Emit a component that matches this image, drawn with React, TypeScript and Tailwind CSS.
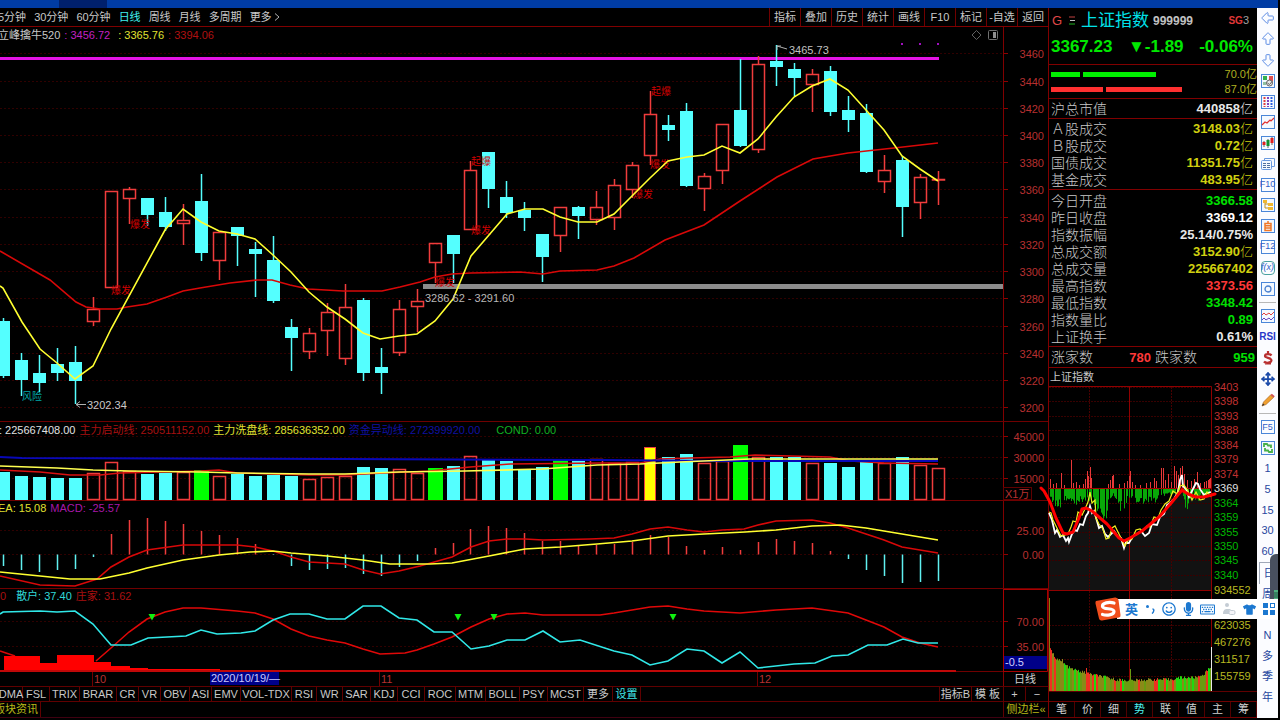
import React from "react";
import { ArrowBigDown, ArrowBigLeft, ArrowBigUp, Move } from "lucide-react";
import { FaMicrophone, FaRegKeyboard, FaRegSmile, FaTshirt } from "react-icons/fa";

type Tone = "up" | "down" | "green" | "yellow";
type Candle = [Tone, number, number, number, number];
type Point = [number, number];

const FIRST_X = 3;
const STEP = 17.98;
const xAt = (i: number) => FIRST_X + STEP * i;
const path = (pts: Point[]) => "M" + pts.map(([x, y]) => `${x} ${y}`).join("L");

// tone, high, body top, body bottom, low
const CANDLES: Candle[] = [
  ["down", 318, 321, 376, 378], ["down", 353, 360, 380, 396], ["down", 355, 373, 383, 392],
  ["down", 348, 364, 373, 381], ["down", 346, 362, 381, 404], ["up", 297, 309, 322, 326],
  ["up", 191, 191, 288, 288], ["up", 187, 189, 199, 224], ["down", 198, 198, 215, 226],
  ["down", 197, 212, 227, 231], ["up", 204, 220, 224, 245], ["down", 174, 201, 253, 261],
  ["up", 232, 232, 261, 280], ["down", 227, 227, 236, 266], ["down", 242, 249, 254, 297],
  ["down", 236, 260, 301, 303], ["down", 319, 327, 338, 371], ["up", 328, 333, 352, 359],
  ["up", 303, 312, 331, 356], ["up", 284, 307, 359, 365], ["down", 298, 300, 373, 381],
  ["down", 348, 367, 373, 394], ["up", 300, 309, 353, 356], ["up", 289, 301, 307, 332],
  ["up", 243, 243, 263, 283], ["down", 235, 235, 254, 283], ["up", 161, 170, 230, 230],
  ["down", 152, 152, 189, 208], ["down", 181, 197, 213, 218], ["down", 202, 210, 218, 231],
  ["down", 234, 234, 257, 282], ["up", 207, 207, 236, 252], ["down", 206, 207, 216, 239],
  ["up", 191, 207, 220, 225], ["up", 179, 185, 218, 230], ["up", 162, 165, 190, 198],
  ["up", 91, 114, 156, 165], ["down", 115, 125, 130, 141], ["down", 103, 111, 186, 187],
  ["up", 173, 176, 189, 211], ["up", 124, 124, 171, 184], ["down", 59, 110, 146, 147],
  ["up", 56, 64, 150, 153], ["down", 45, 61, 67, 86], ["down", 63, 69, 78, 96],
  ["up", 69, 74, 85, 112], ["down", 66, 71, 112, 116], ["down", 96, 110, 120, 132],
  ["down", 104, 113, 172, 173], ["up", 155, 170, 182, 193], ["down", 156, 160, 207, 237],
  ["up", 174, 177, 203, 219], ["up", 171, 179, 179, 205],
];

const VOLUMES: [Tone, number][] = [
  ["down", 472], ["down", 476], ["down", 477], ["down", 478], ["down", 478], ["up", 473],
  ["up", 462], ["up", 471], ["down", 474], ["down", 473], ["up", 472], ["green", 470],
  ["up", 476], ["down", 474], ["down", 476], ["down", 475], ["down", 476], ["up", 479],
  ["up", 477], ["up", 476], ["down", 467], ["down", 468], ["up", 469], ["up", 473],
  ["green", 468], ["down", 466], ["up", 456], ["down", 460], ["down", 461], ["down", 469],
  ["down", 467], ["green", 460], ["down", 460], ["up", 459], ["up", 463], ["up", 462],
  ["yellow", 447], ["down", 457], ["down", 454], ["up", 463], ["up", 461], ["green", 445],
  ["up", 457], ["down", 457], ["down", 457], ["up", 463], ["down", 463], ["down", 467],
  ["down", 462], ["up", 463], ["down", 457], ["up", 465], ["up", 468],
];

const MACD = [
  566, 570, 572, 570, 569, 557, 534, 520, 518, 521, 524, 531, 535, 538, 544, 554, 566, 570, 569,
  568, 574, 576, 567, 561, 548, 543, 529, 526, 528, 533, 541, 541, 545, 545, 544, 542, 535, 537,
  546, 550, 547, 550, 542, 539, 541, 543, 551, 559, 570, 576, 583, 582, 581,
];

const MA5: Point[] = [
  [0, 286], [3, 288], [22, 322], [40, 349], [57, 363], [75, 379], [93, 366], [111, 329], [165, 230],
  [183, 209], [201, 222], [219, 231], [237, 234], [255, 239], [273, 255], [291, 272], [309, 292],
  [327, 307], [345, 319], [363, 333], [380, 339], [399, 336], [417, 334], [435, 321], [453, 299],
  [471, 256], [489, 235], [507, 214], [525, 209], [543, 209], [560, 217], [578, 222], [597, 222],
  [614, 214], [632, 196], [650, 178], [668, 161], [687, 157], [704, 155], [722, 146], [740, 153],
  [758, 139], [776, 117], [794, 97], [812, 86], [830, 79], [848, 90], [866, 110], [884, 130],
  [902, 156], [920, 169], [938, 181],
];
const MA20: Point[] = [
  [0, 251], [50, 280], [76, 302], [86, 307], [100, 309], [117, 309], [127, 307], [147, 304],
  [167, 297], [183, 291], [200, 288], [230, 283], [257, 280], [272, 280], [290, 285], [308, 289],
  [343, 291], [382, 291], [400, 287], [420, 282], [435, 277], [452, 274], [471, 273], [520, 272],
  [543, 274], [560, 271], [597, 270], [614, 266], [634, 258], [665, 240], [704, 225], [740, 201],
  [777, 177], [813, 159], [848, 153], [903, 147], [938, 143],
];
const VOL_BLUE: Point[] = [[0, 457], [22, 458], [345, 459], [600, 460], [720, 461], [938, 461]];
const VOL_YELLOW: Point[] = [
  [0, 466], [57, 468], [93, 470], [129, 471], [200, 472], [237, 473], [309, 474], [345, 474],
  [399, 472], [465, 471], [542, 469], [597, 465], [640, 464], [680, 462], [750, 459], [938, 459],
];
const VOL_RED: Point[] = [
  [0, 470], [40, 472], [70, 475], [100, 475], [120, 473], [201, 471], [219, 470], [237, 473],
  [309, 475], [345, 475], [384, 473], [430, 471], [470, 467], [510, 464], [600, 463], [640, 463],
  [660, 459], [690, 458], [730, 457], [755, 455], [830, 457], [850, 461], [884, 463], [938, 464],
];
const DIF: Point[] = [
  [0, 576], [40, 585], [75, 586], [97, 579], [111, 567], [129, 557], [147, 550], [183, 545],
  [237, 545], [255, 547], [273, 551], [291, 557], [309, 562], [345, 564], [363, 570], [380, 574],
  [399, 571], [420, 566], [452, 557], [471, 547], [489, 541], [507, 539], [525, 539], [543, 540],
  [590, 539], [614, 538], [632, 534], [650, 529], [668, 527], [687, 530], [704, 532], [722, 530],
  [744, 529], [758, 525], [776, 521], [812, 520], [830, 523], [848, 528], [866, 534], [884, 540],
  [902, 547], [938, 553],
];
const DEA: Point[] = [
  [0, 572], [30, 575], [70, 579], [100, 579], [129, 573], [147, 568], [183, 560], [219, 555],
  [250, 552], [273, 551], [291, 553], [327, 556], [363, 560], [390, 564], [430, 564], [452, 563],
  [489, 556], [525, 549], [560, 547], [597, 544], [632, 541], [668, 536], [704, 534], [745, 532],
  [776, 530], [812, 526], [840, 525], [866, 528], [884, 531], [902, 534], [938, 540],
];
const RETAIL: Point[] = [
  [0, 614], [3, 612], [40, 611], [57, 612], [75, 611], [93, 624], [111, 645], [131, 645], [148, 638],
  [186, 636], [201, 630], [217, 634], [241, 633], [255, 631], [273, 620], [290, 614], [309, 614],
  [327, 619], [345, 619], [363, 606], [381, 606], [399, 618], [417, 620], [434, 632], [452, 632],
  [471, 649], [489, 646], [507, 640], [525, 640], [543, 631], [560, 642], [580, 640], [614, 651],
  [632, 655], [650, 665], [668, 661], [687, 649], [704, 651], [722, 663], [740, 652], [758, 668],
  [794, 664], [815, 663], [832, 656], [848, 655], [868, 645], [887, 645], [903, 639], [918, 643],
  [938, 643],
];
const DEALER: Point[] = [
  [96, 661], [111, 648], [129, 632], [147, 619], [165, 612], [183, 608], [201, 608], [237, 611],
  [255, 613], [273, 619], [291, 629], [309, 636], [327, 640], [345, 643], [363, 649], [380, 654],
  [405, 653], [417, 650], [434, 644], [452, 637], [471, 627], [489, 619], [507, 614], [525, 613],
  [543, 615], [600, 615], [614, 613], [632, 610], [650, 607], [668, 606], [687, 609], [704, 611],
  [740, 613], [776, 610], [812, 608], [848, 613], [866, 620], [884, 627], [902, 637], [920, 643],
  [938, 647],
];

const MAIN_AXIS: [string, number][] = [
  ["3460", 53], ["3440", 81], ["3420", 108], ["3400", 135], ["3380", 162], ["3360", 189],
  ["3340", 217], ["3320", 244], ["3300", 271], ["3280", 298], ["3260", 326], ["3240", 353],
  ["3220", 380], ["3200", 407],
];

const SIGNALS: [string, number, number][] = [
  ["爆发", 130, 224], ["爆发", 111, 290], ["爆发", 435, 282], ["爆发", 471, 230], ["起爆", 471, 161],
  ["起爆", 651, 91], ["爆发", 650, 164], ["爆发", 633, 194],
];

function Axis({ ticks, top, bottom }: { ticks: [string, number][]; top: number; bottom: number }) {
  return (
    <g>
      {ticks.map(([label, y]) => (
        <g key={label}>
          <line x1={0} x2={1003} y1={y + 0.5} y2={y + 0.5} className="stroke-[#300000]" strokeDasharray="2 2" />
          <line x1={1003} x2={1008} y1={y + 0.5} y2={y + 0.5} className="stroke-[#900000]" />
          <text x={1044} y={y + 5} textAnchor="end" className="fill-[#b83030] text-[11px]">{label}</text>
        </g>
      ))}
      <line x1={1003.5} x2={1003.5} y1={top} y2={bottom} className="stroke-[#800000]" />
    </g>
  );
}

function PriceChart() {
  return (
    <svg viewBox="0 43 1048 378" preserveAspectRatio="xMinYMid meet" className="block h-[378px] w-full" role="img" aria-label="日线">
      <Axis ticks={MAIN_AXIS} top={43} bottom={421} />
      <rect x={423} y={284} width={580} height={5} className="fill-[#8c8c8c]" />
      <rect x={0} y={57} width={939} height={3} className="fill-[#e414e4]" />
      {[902, 920, 938].map((x) => (
        <rect key={x} x={x - 1} y={43} width={2} height={2} className="fill-[#a010c0]" />
      ))}
      {CANDLES.map(([tone, hi, top, bottom, lo], i) => {
        const x = Math.round(xAt(i)) + 0.5;
        if (tone === "down") {
          return (
            <g key={i} className="fill-[#54ffff] stroke-[#54ffff]">
              <line x1={x} x2={x} y1={hi} y2={lo} strokeWidth={1.5} />
              <rect x={x - 6.5} y={top} width={13} height={bottom - top} stroke="none" />
            </g>
          );
        }
        return (
          <g key={i} className="fill-none stroke-[#f03c3c]" strokeWidth={1.5}>
            <line x1={x} x2={x} y1={hi} y2={top} />
            <line x1={x} x2={x} y1={bottom} y2={lo} />
            <rect x={x - 6} y={top + 0.5} width={12} height={Math.max(bottom - top - 1, 0.5)} />
          </g>
        );
      })}
      <path d={path(MA20)} className="fill-none stroke-[#d80808]" strokeWidth={1.6} />
      {SIGNALS.map(([label, x, y], i) => (
        <text key={i} x={x} y={y + 4} className="fill-[#d00000] text-[10px]">{label}</text>
      ))}
      <text x={22} y={400} className="fill-[#00a8a8] text-[10px]">风险</text>
      <path d={path(MA5)} className="fill-none stroke-[#ffff30]" strokeWidth={1.6} />
      <path d="M777 46L787 49M777 46h4M777 46v4" className="fill-none stroke-[#b0b0b0]" />
      <text x={789} y={54} className="fill-[#c0c0c0] text-[11px]">3465.73</text>
      <path d="M76 404.500H86M76 404.500l4 -3M76 404.500l4 3" className="fill-none stroke-[#b0b0b0]" />
      <text x={87} y={409} className="fill-[#c8c8c8] text-[11px]">3202.34</text>
      <text x={425} y={302} className="fill-[#b8b8b8] text-[11px]">3286.62 - 3291.60</text>
    </svg>
  );
}

function VolumeChart() {
  return (
    <svg viewBox="0 438 1048 62" preserveAspectRatio="xMinYMid meet" className="block h-[62px] w-full overflow-visible" role="img" aria-label="成交量">
      <Axis ticks={[["45000", 436], ["30000", 457], ["15000", 478]]} top={438} bottom={500} />
      {VOLUMES.map(([tone, top], i) => {
        const x = Math.round(xAt(i));
        const h = 500 - top;
        if (tone === "up") {
          return <rect key={i} x={x - 5.5} y={top + 0.5} width={12} height={h - 1} className="fill-none stroke-[#f03c3c]" strokeWidth={1.5} />;
        }
        if (tone === "green") return <rect key={i} x={x - 7} y={top} width={15} height={h} className="fill-[#00ff00]" />;
        if (tone === "yellow") {
          return <rect key={i} x={x - 5.5} y={top + 0.5} width={11} height={h} className="fill-[#ffff00] stroke-[#f04040]" />;
        }
        return <rect key={i} x={x - 6} y={top} width={13} height={h} className="fill-[#54ffff]" />;
      })}
      <path d={path(VOL_RED)} className="fill-none stroke-[#d81010]" strokeWidth={1.5} />
      <path d={path(VOL_BLUE)} className="fill-none stroke-[#0808b8]" strokeWidth={2} />
      <path d={path(VOL_YELLOW)} className="fill-none stroke-[#ffff50]" strokeWidth={1.6} />
      <rect x={1003.5} y={487.5} width={28} height={12} className="fill-none stroke-[#600000]" />
      <text x={1005} y={498} className="fill-[#b83030] text-[11px]">X1万</text>
    </svg>
  );
}

function MacdChart() {
  return (
    <svg viewBox="0 516 1048 72" preserveAspectRatio="xMinYMid meet" className="block h-[72px] w-full" role="img" aria-label="MACD">
      <Axis ticks={[["25.00", 530], ["0.00", 554]]} top={516} bottom={588} />
      {MACD.map((y, i) => {
        const x = Math.round(xAt(i)) + 0.5;
        return (
          <line key={i} x1={x} x2={x} y1={554.5} y2={y} strokeWidth={1.5} className={y < 554 ? "stroke-[#f03c3c]" : "stroke-[#60f0f0]"} />
        );
      })}
      <path d={path(DIF)} className="fill-none stroke-[#d80808]" strokeWidth={1.6} />
      <path d={path(DEA)} className="fill-none stroke-[#ffff30]" strokeWidth={1.6} />
    </svg>
  );
}

function DealerChart() {
  return (
    <svg viewBox="0 603 1048 69" preserveAspectRatio="xMinYMid meet" className="block h-[69px] w-full" role="img" aria-label="散户 庄家">
      <Axis ticks={[["70.00", 621], ["35.00", 646]]} top={603} bottom={672} />
      <path d="M0 651L6 653L15 656" className="fill-none stroke-[#d80808]" strokeWidth={1.6} />
      <path d="M4 671V656H40V663H57V655H94V662H111V666H130V668H148V669H220V671Z" className="fill-[#ff0000]" />
      <rect x={0} y={670} width={956} height={2} className="fill-[#c00808]" />
      <rect x={956} y={671} width={47} height={1} className="fill-[#700000]" />
      <path d={path(DEALER)} className="fill-none stroke-[#e00808]" strokeWidth={1.6} />
      <path d={path(RETAIL)} className="fill-none stroke-[#30e8e8]" strokeWidth={1.6} />
      {[152, 458, 494, 673].map((x) => (
        <path key={x} d={`M${x - 3.5} 614h7l-3.5 6.5z`} className="fill-[#10f010]" />
      ))}
      <path d="M1003.5 603V671.5H1047.5V603" className="fill-none stroke-[#a80000]" />
      <rect x={1004} y={656} width={43} height={13} className="fill-[#000088]" />
      <text x={1005} y={666} className="fill-[#d0d0ff] text-[11px]">-0.5</text>
    </svg>
  );
}

function TimeAxis() {
  return (
    <svg viewBox="0 672 1048 14" preserveAspectRatio="xMinYMid meet" className="block h-[14px] w-full" role="img" aria-label="时间">
      {([["10", 93], ["11", 380], ["12", 758]] as [string, number][]).map(([label, x]) => (
        <g key={label}>
          <line x1={x - 0.5} x2={x - 0.5} y1={672} y2={686} className="stroke-[#700000]" />
          <text x={x + 1} y={683} className="fill-[#b83030] text-[11px]">{label}</text>
        </g>
      ))}
      <rect x={210} y={672} width={69} height={13} className="fill-[#000088]" />
      <text x={211} y={682} className="fill-[#c8c8ff] text-[11px]">2020/10/19/—</text>
      <line x1={1003.5} x2={1003.5} y1={672} y2={686} className="stroke-[#800000]" />
      <text x={1025} y={683} textAnchor="middle" className="fill-[#d0d0d0] text-[11px]">日线</text>
    </svg>
  );
}

function InfoRow({ height, bright, children }: { height: string; bright?: boolean; children: React.ReactNode }) {
  return (
    <div className={"flex whitespace-nowrap text-[11px] " + height}>
      <div className="flex min-w-0 flex-1 items-center">{children}</div>
      <div className={"w-[45px] border-l " + (bright ? "border-r border-t border-[#a80000]" : "border-[#800000]")} />
    </div>
  );
}

const PERIODS = ["5分钟", "30分钟", "60分钟", "日线", "周线", "月线", "多周期", "更多"];
const TOOLS = ["指标", "叠加", "历史", "统计", "画线", "F10", "标记", "-自选", "返回"];
const INDICATORS: [string, string][] = [
  ["DMA", "w-[23px]"], ["FSL", "w-[27px]"], ["TRIX", "w-[30px]"], ["BRAR", "w-[37px]"],
  ["CR", "w-[22px]"], ["VR", "w-[22px]"], ["OBV", "w-[29px]"], ["ASI", "w-[22px]"],
  ["EMV", "w-[29px]"], ["VOL-TDX", "w-[51px]"], ["RSI", "w-[25px]"], ["WR", "w-[26px]"],
  ["SAR", "w-[28px]"], ["KDJ", "w-[27px]"], ["CCI", "w-[27px]"], ["ROC", "w-[31px]"],
  ["MTM", "w-[30px]"], ["BOLL", "w-[34px]"], ["PSY", "w-[28px]"], ["MCST", "w-[36px]"],
  ["更多", "w-[29px]"], ["设置", "w-[28px]"],
];

type QuoteRow = [string, string, string, string];
const GREEN = "text-[#00e000]";
const RED = "text-[#ff3838]";
const WHITE = "text-[#e8e8e8]";
const YELLOW = "text-[#d0d010]";
const SECTIONS: { pad: string; rows: QuoteRow[] }[] = [
  { pad: "pt-px pb-px", rows: [["沪总市值", "440858", "亿", WHITE]] },
  {
    pad: "pt-px pb-px",
    rows: [["Ａ股成交", "3148.03", "亿", YELLOW], ["Ｂ股成交", "0.72", "亿", YELLOW], ["国债成交", "11351.75", "亿", YELLOW], ["基金成交", "483.95", "亿", YELLOW]],
  },
  {
    pad: "pt-0.5 pb-px",
    rows: [
      ["今日开盘", "3366.58", "", GREEN], ["昨日收盘", "3369.12", "", "text-white"], ["指数振幅", "25.14/0.75%", "", WHITE],
      ["总成交额", "3152.90", "亿", YELLOW], ["总成交量", "225667402", "", YELLOW], ["最高指数", "3373.56", "", RED],
      ["最低指数", "3348.42", "", GREEN], ["指数量比", "0.89", "", GREEN], ["上证换手", "0.61%", "", WHITE],
    ],
  },
];

const MINI_AXIS: [string, number, string][] = [
  ["3403", 387, "fill-[#c03030]"], ["3398", 401, "fill-[#c03030]"], ["3393", 416, "fill-[#c03030]"],
  ["3388", 430, "fill-[#c03030]"], ["3384", 445, "fill-[#c03030]"], ["3379", 459, "fill-[#c03030]"],
  ["3374", 474, "fill-[#c03030]"], ["3369", 488, "fill-[#e0e0e0]"], ["3364", 503, "fill-[#00b800]"],
  ["3359", 517, "fill-[#00b800]"], ["3355", 532, "fill-[#00b800]"], ["3350", 546, "fill-[#00b800]"],
  ["3345", 560, "fill-[#00b800]"], ["3340", 575, "fill-[#00b800]"], ["934552", 590, "fill-[#b8b820]"],
  ["623035", 625, "fill-[#b8b820]"], ["467276", 642, "fill-[#b8b820]"], ["311517", 659, "fill-[#b8b820]"],
  ["155759", 676, "fill-[#b8b820]"],
];
const noise = (i: number) => {
  const v = Math.sin(i * 12.9898) * 43758.5453;
  return v - Math.floor(v);
};
const level = (pts: Point[], x: number) => {
  for (let i = 1; i < pts.length; i++) {
    if (x <= pts[i][0]) {
      const [x0, y0] = pts[i - 1];
      const [x1, y1] = pts[i];
      return y0 + ((y1 - y0) * (x - x0)) / (x1 - x0);
    }
  }
  return pts[pts.length - 1][1];
};
const RED_BARS: Point[] = [
  [1050, 9], [1053, 4], [1056, 5], [1061, 15], [1064, 3], [1071, 28], [1073, 5], [1076, 6], [1079, 3],
  [1083, 4], [1085, 9], [1087, 17], [1088, 12], [1090, 21], [1091, 10], [1108, 4], [1110, 8], [1112, 12],
  [1113, 13], [1119, 4], [1124, 5], [1127, 7], [1129, 12], [1130, 17], [1132, 6], [1135, 3], [1140, 3],
  [1146, 5], [1150, 6], [1154, 10], [1156, 7], [1161, 20], [1163, 20], [1165, 8], [1168, 14], [1171, 6],
  [1174, 22], [1176, 17], [1178, 13], [1180, 20], [1182, 22], [1184, 14], [1187, 8], [1191, 7],
  [1194, 9], [1197, 16], [1200, 5], [1204, 6], [1206, 7], [1208, 8], [1209, 9], [1210, 10],
];
const GREEN_LEVEL: Point[] = [
  [1049, 14], [1060, 20], [1066, 12], [1075, 16], [1088, 12], [1092, 14], [1096, 24], [1106, 34],
  [1108, 14], [1113, 5], [1118, 20], [1124, 28], [1127, 8], [1136, 16], [1146, 14], [1152, 17],
  [1160, 8], [1172, 5], [1182, 3], [1186, 26], [1189, 10], [1194, 14], [1202, 11], [1211, 8],
];
const VOL_LEVEL: Point[] = [
  [1050, 40], [1055, 32], [1062, 27], [1070, 21], [1080, 18], [1092, 15], [1102, 13], [1115, 10],
  [1130, 9], [1150, 10], [1170, 10], [1180, 12], [1195, 12], [1203, 15], [1208, 20], [1211, 24],
];
const WHITE_LINE: Point[] = [
  [1049, 513], [1052, 520], [1055, 533], [1057, 530], [1060, 537], [1063, 535], [1066, 541], [1068, 538],
  [1069, 542], [1072, 534], [1075, 530], [1077, 531], [1080, 524], [1083, 525], [1086, 516], [1088, 513],
  [1090, 506], [1092, 513], [1094, 511], [1097, 521], [1099, 528], [1102, 526], [1105, 534], [1108, 537],
  [1111, 534], [1114, 531], [1118, 537], [1121, 538], [1124, 548], [1126, 542], [1129, 543], [1133, 536],
  [1137, 534], [1141, 531], [1145, 536], [1149, 533], [1152, 524], [1157, 525], [1160, 517], [1164, 514],
  [1167, 505], [1170, 503], [1174, 499], [1178, 492], [1180, 480], [1182, 475], [1183, 486], [1186, 489],
  [1189, 497], [1193, 489], [1196, 483], [1198, 484], [1200, 489], [1204, 495], [1207, 493], [1211, 492],
];
const YELLOW_LINE: Point[] = [
  [1049, 512], [1051, 513], [1053, 520], [1057, 528], [1061, 536], [1065, 535], [1068, 534], [1071, 527],
  [1073, 521], [1076, 522], [1078, 512], [1082, 515], [1085, 509], [1088, 502], [1090, 492], [1092, 503],
  [1095, 500], [1096, 518], [1099, 524], [1103, 529], [1106, 539], [1109, 538], [1112, 528], [1115, 526],
  [1117, 530], [1119, 534], [1122, 540], [1125, 546], [1128, 540], [1132, 539], [1136, 530], [1140, 529],
  [1143, 531], [1147, 526], [1150, 527], [1154, 517], [1158, 518], [1161, 510], [1165, 504], [1169, 501],
  [1173, 491], [1177, 494], [1180, 486], [1184, 485], [1188, 491], [1192, 500], [1196, 492], [1200, 500],
  [1204, 499], [1207, 492], [1211, 497],
];
const TREND: Point[] = [
  [1041, 488], [1044, 491], [1050, 502], [1056, 518], [1063, 533], [1067, 534], [1073, 532], [1079, 518],
  [1082, 509], [1086, 508], [1092, 511], [1107, 524], [1119, 538], [1124, 541], [1130, 538], [1142, 531],
  [1160, 516], [1172, 502], [1182, 490], [1188, 494], [1196, 497], [1204, 497], [1215, 494],
];

function IntradayChart() {
  const bars: number[] = [];
  for (let x = 1050; x < 1211; x++) bars.push(x);
  const spikes: Record<number, number> = { 1062: 32, 1086: 23, 1130: 22 };
  const tones = ["fill-[#20d810]", "fill-[#8a8a18]", "fill-[#f03020]", "fill-[#6a9a10]"];
  return (
    <svg viewBox="1049 386 208 315" preserveAspectRatio="xMinYMin meet" className="block h-[315px] w-full overflow-visible" role="img" aria-label="上证指数分时">
      <path d={path(WHITE_LINE) + "V590H1049Z"} className="fill-[#121212]" />
      {MINI_AXIS.map(([label, y, tone]) => (
        <g key={label}>
          <line x1={1049} x2={1211} y1={y + 0.5} y2={y + 0.5} className="stroke-[#380000]" strokeDasharray="2 1" />
          <text x={1214} y={y + 4} className={"text-[11px] " + tone}>{label}</text>
        </g>
      ))}
      <path d="M1089.500 387V691M1171.500 387V691" className="stroke-[#480000]" strokeDasharray="2 1" />
      <path d="M1049 386.500H1211.500V691M1129.500 387V691M1049 590.500H1211" className="fill-none stroke-[#900000]" />
      <path d="M1049 488.500H1211" className="stroke-[#a00000]" />
      <path d="M1049 691.500H1257" className="stroke-[#600000]" />
      {RED_BARS.map(([x, h]) => (
        <rect key={x} x={x} y={488 - h} width={1} height={h} className="fill-[#e83838]" />
      ))}
      {bars.map((x) => {
        const n = noise(x);
        const h = level(GREEN_LEVEL, x) * (0.35 + 0.65 * n);
        return n > 0.22 ? <rect key={x} x={x} y={489} width={1} height={h} className="fill-[#08a808]" /> : null;
      })}
      {bars.map((x) => {
        const h = spikes[x] ?? level(VOL_LEVEL, x) + noise(x + 7) * 3;
        return <rect key={x} x={x} y={691 - h} width={1} height={h} className={tones[Math.floor(noise(Math.floor(x / 2) + 31) * 4)]} />;
      })}
      <rect x={1049} y={598} width={1} height={93} className="fill-[#808010]" />
      <rect x={1211} y={647} width={1} height={44} className="fill-[#e8e8e8]" />
      <path d={path(WHITE_LINE)} className="fill-none stroke-white" strokeWidth={1.8} />
      <path d={path(YELLOW_LINE)} className="fill-none stroke-[#f0f020]" strokeWidth={1.2} />
      <path d={path(TREND)} className="fill-none stroke-[#ff0000]" strokeWidth={3} strokeLinecap="round" strokeLinejoin="round" />
    </svg>
  );
}

function QuotePanel() {
  return (
    <aside className="flex w-[209px] shrink-0 flex-col border-l border-[#800000]">
      <header className="border-b border-[#800000]">
        <div className="flex h-[25px] items-center pl-[3px] pr-2">
          <span className="w-4 text-[13px] text-[#e04848]">G</span>
          <svg viewBox="0 0 8 9" className="h-[9px] w-2" aria-hidden="true">
            <path d="M1 1h6" stroke="#c04040" />
            <path d="M2 4.500h5" stroke="#c0c0c0" />
            <path d="M1 8h6" stroke="#20b020" />
          </svg>
          <h1 className="ml-[5px] text-[17px] text-[#00e0e8]">上证指数</h1>
          <span className="ml-1 flex-1 text-[12px] font-bold text-[#c0c0c0]">999999</span>
          <span className="text-[10px] font-bold text-[#e03838]">SG</span>
          <span className="text-[11px] text-[#a0a0a0]">3</span>
        </div>
        <div className="flex h-[31px] items-center justify-between pb-1 pl-0.5 pr-1 text-[17px] font-bold text-[#00e800]">
          <span>3367.23</span>
          <span>▼-1.89</span>
          <span>-0.06%</span>
        </div>
      </header>
      <div className="border-b border-[#800000] py-0.5 pl-0.5 text-[11px] text-[#b0b020]">
        <div className="flex h-[15px] items-center gap-[3px]">
          <span className="h-[5px] w-[29px] bg-[#00f000]" />
          <span className="h-[5px] w-[73px] bg-[#00f000]" />
          <span className="ml-auto">70.0亿</span>
        </div>
        <div className="flex h-[14px] items-center gap-[3px]">
          <span className="h-[5px] w-[52px] bg-[#ff3030]" />
          <span className="h-[5px] w-[76px] bg-[#ff3030]" />
          <span className="ml-auto">87.0亿</span>
        </div>
      </div>
      {SECTIONS.map((section, s) => (
        <div key={s} className={"border-b border-[#800000] pl-0.5 pr-1 " + section.pad}>
          <table className="w-full border-collapse">
            <tbody>
              {section.rows.map(([label, value, unit, tone]) => (
                <tr key={label} className="h-[17px]">
                  <th scope="row" className="p-0 text-left text-[14px] font-light text-[#c8c8c8]">{label}</th>
                  <td className={"p-0 text-right text-[13px] font-bold " + tone}>
                    {value}
                    <span className="font-light">{unit}</span>
                  </td>
                </tr>
              ))}
            </tbody>
          </table>
        </div>
      ))}
      <div className="flex h-[21px] items-center border-b border-[#800000] pl-0.5 pr-0.5 text-[14px] font-light text-[#c8c8c8]">
        <span>涨家数</span>
        <span className="flex-1 pr-1 text-right text-[13px] font-bold text-[#ff3838]">780</span>
        <span>跌家数</span>
        <span className="flex-1 text-right text-[13px] font-bold text-[#00e000]">959</span>
      </div>
      <h2 className="flex h-[18px] items-center pl-px text-[11px] text-[#c8c8c8]">上证指数</h2>
      <IntradayChart />
      <nav className="grid h-[17px] grid-cols-8 border-y border-[#700000] text-[11px] text-[#d0d0d0]">
        {["笔", "价", "细", "势", "联", "值", "主", "筹"].map((t) => (
          <button key={t} type="button" className={"border-r border-[#500000] " + (t === "势" ? "text-[#50f0f0]" : "")}>{t}</button>
        ))}
      </nav>
    </aside>
  );
}

function Framed({ children }: { children: React.ReactNode }) {
  return (
    <svg viewBox="0 0 14 14" className="h-[14px] w-[14px]" aria-hidden="true">
      <rect x="0.500" y="0.500" width="13" height="13" fill="#f4f9ff" stroke="#4a86d8" />
      {children}
    </svg>
  );
}

function Label({ children }: { children: React.ReactNode }) {
  return <span className="flex h-[14px] w-[14px] items-center justify-center border border-[#4a86d8] text-[9px] text-[#3060c8]">{children}</span>;
}

const arrow = "h-[16px] w-[16px] text-[#5c8ce4]";
const GROUP_A: [string, React.ReactNode][] = [
  ["后退", <ArrowBigLeft className={arrow} strokeWidth={1.5} />],
  ["向上", <ArrowBigUp className={arrow} strokeWidth={1.5} />],
  ["向下", <ArrowBigDown className={arrow} strokeWidth={1.5} />],
  ["报价", <Framed><path d="M2 2h4v4H2z" fill="#30b050" /><path d="M8 2h4v5H8z" fill="#e05050" /><path d="M2 8h3v3H2z" fill="#90c0a0" /><circle cx="8.500" cy="9" r="3" fill="#e8e8e8" stroke="#606060" /><path d="M6.500 9l2 1.500 3-3.500" fill="none" stroke="#606060" /></Framed>],
  ["列表", <Framed><path d="M3.500 2v10" stroke="#e04040" strokeWidth="2" strokeDasharray="2 1" /><path d="M7 2v10" stroke="#8040c0" strokeWidth="2" strokeDasharray="2 1" /><path d="M10.500 2v10" stroke="#3060e0" strokeWidth="2" strokeDasharray="2 1" /></Framed>],
  ["分时", <Framed><path d="M1 10l3-3 2 1 3-3 1 1 3-3" fill="none" stroke="#e03030" strokeWidth="1.200" /></Framed>],
  ["K线", <Framed><path d="M3 5v6M7 3v9M11 1v8" stroke="#606060" /><rect x="1.500" y="6" width="3" height="3" fill="#e02020" /><rect x="5.500" y="4" width="3" height="6" fill="#109030" /><rect x="9.500" y="2" width="3" height="5" fill="#e02020" /></Framed>],
  ["资料", <svg viewBox="0 0 14 14" className="h-[14px] w-[14px]" aria-hidden="true"><path d="M3.500 4V1.500h10v8H11" fill="none" stroke="#6a9ae0" /><rect x="0.500" y="3.500" width="10" height="9" rx="1" fill="#f4f9ff" stroke="#6a9ae0" /><path d="M2 6.500h7M2 8.500h7M2 10.500h7" stroke="#5070a0" strokeDasharray="3 1" /></svg>],
  ["F10", <Label>F10</Label>],
  ["板块", <Framed><path d="M4 4v6h4M4 6h4" fill="none" stroke="#c09020" /><rect x="2" y="2" width="4" height="3" fill="#f0b830" /><rect x="7" y="5" width="5" height="3" fill="#f0b830" /><rect x="7" y="9" width="5" height="3" fill="#f0b830" /></Framed>],
  ["自选股", <Framed><path d="M4 4.500h6v7H4zM4 6.800h6M4 9h6M7 2v2.500" fill="none" stroke="#f07828" strokeWidth="1.500" /></Framed>],
  ["F12", <Label>F12</Label>],
  ["公式", <span className="flex h-[14px] w-[14px] items-center justify-center rounded border border-[#4aa0a0] text-[9px] italic text-[#3060c8]">f(x)</span>],
  ["周期", <Framed><circle cx="7" cy="7" r="3" fill="none" stroke="#4a80d0" strokeWidth="1.300" /></Framed>],
];
const GROUP_B: [string, React.ReactNode][] = [
  ["叠加", <Framed><path d="M1 6l2-2 2 2 3-2 2 2 3-3" fill="none" stroke="#e04040" /><path d="M1 11l2-2 2 2 3-2 2 2 3-3" fill="none" stroke="#6040c0" /></Framed>],
  ["RSI", <b className="text-[10px] text-[#2838c8]">RSI</b>],
  ["资金", <svg viewBox="0 0 12 14" className="h-[14px] w-3" aria-hidden="true"><path d="M9.500 4.500C8 2.500 3 2.800 3 5s6.500 1.500 6.500 4.300S3.500 12.500 2 10.500M6 0v3M3 12.500h6" fill="none" stroke="#b83030" strokeWidth="2.200" /></svg>],
  ["移动", <Move className="h-[14px] w-[14px] text-[#1848a8]" strokeWidth={3} />],
  ["画笔", <svg viewBox="0 0 14 14" className="h-[14px] w-[14px]" aria-hidden="true"><path d="M1 13l1.500-4 7-7 3 2.500-7.500 7z" fill="#f0a030" stroke="#a06020" strokeWidth="0.600" /><path d="M9.500 2l1.300-1.200 3 2.500L12.500 4.500z" fill="#d05050" /><path d="M1 13l1-2.500 1.500 1.200z" fill="#303030" /></svg>],
];
const GROUP_C: [string, React.ReactNode][] = [
  ["F5", <Label>F5</Label>],
  ["刷新", <Framed><path d="M3 6V3h3l1 1.500h3V7M11 8v3H8L7 9.500H4V7" fill="none" stroke="#48b048" strokeWidth="1.800" /></Framed>],
  ...["1", "5", "15", "30", "60", "日", "周", "", "N", "多", "季", "年"].map((t): [string, React.ReactNode] => [t, t]),
];

function ToolGroup({ items, grow }: { items: [string, React.ReactNode][]; grow: string }) {
  return (
    <div className={"flex flex-col " + grow}>
      {items.map(([name, icon], i) =>
        name === "" ? (
          <span key={i} className="flex-1" />
        ) : (
          <button key={i} type="button" aria-label={name} className={"flex min-h-0 flex-1 items-center justify-center text-[11px] text-[#2848a0] " + (name === "日" ? "ml-0.5 border-l border-t border-[#a0a8b8]" : "")}>
            {icon}
          </button>
        ),
      )}
    </div>
  );
}

function SideTools() {
  return (
    <nav className="relative mr-0.5 flex w-[21px] shrink-0 flex-col bg-[#fbfcff] pb-[10px]">
      <ToolGroup items={GROUP_A} grow="flex-[14_1_0%]" />
      <hr className="mx-0.5 my-[3px] border-[#b8b8b8]" />
      <ToolGroup items={GROUP_B} grow="flex-[5_1_0%]" />
      <hr className="mx-0.5 my-[3px] border-[#b8b8b8]" />
      <ToolGroup items={GROUP_C} grow="flex-[14_1_0%]" />
      <div className="absolute bottom-[118px] right-0 flex h-[46px] w-2 flex-col justify-end rounded-tl-md bg-[#48505e] pl-1">
        <span className="h-[10px] border-y-2 border-[#50b080] bg-[#388060]" />
      </div>
    </nav>
  );
}

function InputMethodBar() {
  return (
    <div className="absolute bottom-[97px] right-0.5 flex h-[24px] items-center">
      <svg viewBox="0 0 26 24" className="z-10 -mr-1 h-[24px] w-[26px]" aria-hidden="true">
        <path d="M1 4L20 0.500Q23 0.300 23.500 3L25.500 18Q25.800 20 24 20.500L7 23.500Q4.500 23.800 4 21.500L0.500 6.500Q0.300 4.500 1 4Z" fill="#f04e1c" />
        <path d="M19 6C14 4.500 7 6 7.500 9.500S19 10.500 19 14.500 11 18.500 7.500 17.500" fill="none" stroke="#fff" strokeWidth="3.200" strokeLinecap="round" />
      </svg>
      <div className="flex h-5 w-[161px] items-center justify-between bg-white pl-2 pr-[3px] text-[#1c78d0]">
        <span className="text-[13px] font-bold">英</span>
        <svg viewBox="0 0 10 10" className="h-[10px] w-[10px]" aria-hidden="true">
          <circle cx="2.500" cy="2.500" r="1.500" fill="currentColor" />
          <path d="M7.500 5a1.300 1.300 0 0 1 1.300 1.500Q8.500 8.500 7 9.500" fill="none" stroke="currentColor" strokeWidth="1.500" />
        </svg>
        <FaRegSmile className="h-[14px] w-[14px]" />
        <FaMicrophone className="h-[14px] w-[11px]" />
        <FaRegKeyboard className="h-[15px] w-[15px]" />
        <svg viewBox="0 0 14 14" className="h-[14px] w-[14px]" aria-hidden="true">
          <circle cx="5" cy="3" r="2" fill="#c4ccd4" />
          <path d="M1 12c0-4 2-5 4-5h4l-2 2v3z" fill="#c4ccd4" />
          <rect x="7" y="8.500" width="6" height="4" rx="1.500" fill="#f4f4f8" stroke="#c4ccd4" />
        </svg>
        <FaTshirt className="h-[13px] w-[13px]" />
        <svg viewBox="0 0 12 12" className="h-3 w-3" aria-hidden="true">
          <path d="M0 0h5v5H0zM0 7h5v5H0zM7 7h5v5H7z" fill="currentColor" />
          <rect x="7.500" y="0.500" width="4" height="4" fill="none" stroke="currentColor" />
        </svg>
      </div>
    </div>
  );
}

export default function App() {
  return (
    <div className="flex min-h-screen flex-col bg-black pb-0.5 font-['Liberation_Sans','Noto_Sans_CJK_SC',sans-serif] leading-none text-[#c8c8c8]">
      <div className="mr-0.5 flex h-2 bg-[#003ca4]">
        <span className="ml-[59px] w-[48px] bg-[#00206c]" />
      </div>
      <div className="relative flex flex-1">
        <main className="flex min-w-0 flex-1 flex-col">
          <nav className="flex h-[19px] items-stretch whitespace-nowrap border-b border-[#800000] text-[11px]">
            <div className="-ml-0.5 flex flex-1 items-center gap-2">
              {PERIODS.map((p) => (
                <button key={p} type="button" className={"flex items-center gap-0.5 " + (p === "日线" ? "text-[#40f0f0]" : "")}>
                  {p}
                  {p === "更多" && (
                    <svg viewBox="0 0 6 8" className="h-2 w-1.5" aria-hidden="true">
                      <path d="M1 0.500l4 3.500-4 3.500" fill="none" stroke="#b0b0b0" />
                    </svg>
                  )}
                </button>
              ))}
            </div>
            {TOOLS.map((t) => (
              <button key={t} type="button" className="w-[31px] border-l border-[#700000]">{t}</button>
            ))}
          </nav>

          <section className="border-b border-[#700000]">
            <InfoRow height="h-[16px]">
              <span className="-ml-0.5">立峰擒牛520</span>
              <span className="ml-1 text-[#c020c0]">: 3456.72</span>
              <span className="ml-2 text-[#e0e030]">: 3365.76</span>
              <span className="ml-1 text-[#b01010]">: 3394.06</span>
              <svg viewBox="0 0 30 12" className="ml-auto mr-0.5 h-3 w-[30px]" aria-hidden="true">
                <path d="M1 6l4.500-4.500L10 6l-4.500 4.500z" fill="none" stroke="#606060" />
                <rect x="17.500" y="1.500" width="9" height="9" rx="1" fill="none" stroke="#707070" />
                <rect x="22" y="3" width="3" height="6" fill="#909090" />
              </svg>
            </InfoRow>
            <PriceChart />
          </section>

          <section className="border-b border-[#700000]">
            <InfoRow height="h-[16px]">
              <span className="-ml-px text-[#e0e0e0]">: 225667408.00</span>
              <span className="ml-1 text-[#a81010]">主力启动线: 250511152.00</span>
              <span className="ml-1 text-[#e0e030]">主力洗盘线: 285636352.00</span>
              <span className="ml-1 text-[#1010a0]">资金异动线: 272399920.00</span>
              <span className="ml-4 text-[#10b020]">COND: 0.00</span>
            </InfoRow>
            <VolumeChart />
          </section>

          <section className="border-b border-[#700000]">
            <InfoRow height="h-[15px]">
              <span className="-ml-0.5 text-[#e0e030]">EA: 15.08</span>
              <span className="ml-1 text-[#a818a8]">MACD: -25.57</span>
            </InfoRow>
            <MacdChart />
          </section>

          <section>
            <InfoRow height="h-[14px]" bright>
              <span className="text-[#a81010]">0</span>
              <span className="ml-[10px] text-[#30d8d8]">散户: 37.40</span>
              <span className="ml-1 text-[#a81010]">庄家: 31.62</span>
            </InfoRow>
            <DealerChart />
          </section>

          <TimeAxis />

          <nav className="flex h-4 items-stretch whitespace-nowrap border-y border-[#600000] text-[11px]">
            {INDICATORS.map(([name, width]) => (
              <button key={name} type="button" className={"flex shrink-0 items-center justify-center border-r border-[#600000] " + width + (name === "设置" ? " text-[#40e8e8]" : "")}>
                {name}
              </button>
            ))}
            <span className="flex-1" />
            <button type="button" className="w-8 border-l border-[#600000]">指标B</button>
            <button type="button" className="w-8 border-l border-[#600000]">模 板</button>
            <button type="button" className="w-[22px] border-l border-[#600000]">+</button>
            <button type="button" className="w-[23px] border-l border-[#600000]">−</button>
          </nav>

          <footer className="flex h-4 items-stretch overflow-hidden whitespace-nowrap border-b border-[#400010] text-[11px] text-[#b8b818]">
            <button type="button" className="-ml-2 w-[49px] border-r border-[#600000]">版块资讯</button>
            <span className="flex-1" />
            <button type="button" className="w-[45px] border-l border-[#600000]">侧边栏«</button>
          </footer>
        </main>
        <QuotePanel />
        <SideTools />
        <InputMethodBar />
      </div>
    </div>
  );
}
